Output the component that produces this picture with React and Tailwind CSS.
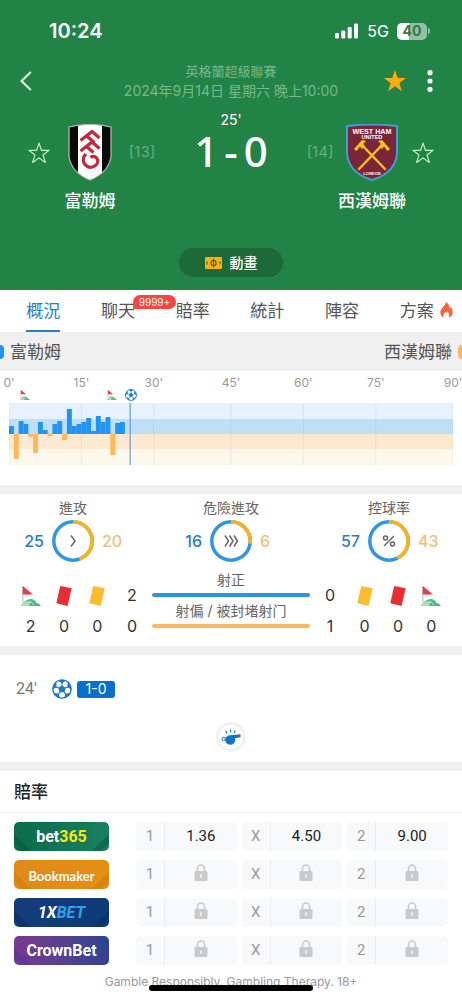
import React from "react";

const tabs = [
  { label: "概況", active: true },
  { label: "聊天", badge: "9999+" },
  { label: "賠率" },
  { label: "統計" },
  { label: "陣容" },
  { label: "方案", hot: true },
];

// Momentum per minute: positive is home pressure, negative is away pressure.
const momentum = [
  8, -25, 13, 10, -3, -19, 12, 4, -2, 10, 13, -6, 25, 8, 10, 12, 16, 3, 18, 12,
  17, -21, 11, 12,
];

// Each half takes one extra slot for stoppage time.
const SLOTS = 92;
const gridSlots = [0, 15, 30, 46, 61, 76, 92];
const minuteLabels = ["0'", "15'", "30'", "45'", "60'", "75'", "90'"];

const bookmakers = [
  {
    id: "bet365",
    bg: "bg-linear-to-r from-[#0b6b4b] to-[#1a8060]",
    stripe: "#05573b",
    logo: (
      <span className="font-['Roboto',sans-serif] text-[16px] font-bold">
        bet<span className="text-[#f5e81e]">365</span>
      </span>
    ),
    odds: ["1.36", "4.50", "9.00"],
  },
  {
    id: "Bookmaker",
    bg: "bg-linear-to-r from-[#e08a1a] to-[#e48e14]",
    stripe: "#cf7a0c",
    logo: (
      <span className="font-['Lato',sans-serif] text-[13px] font-bold">Bookmaker</span>
    ),
    odds: [null, null, null],
  },
  {
    id: "1XBET",
    bg: "bg-linear-to-r from-[#143c7a] to-[#0d3a78]",
    stripe: "#0a2c60",
    logo: (
      <span className="font-['Roboto',sans-serif] text-[16px] font-bold italic">
        1X<span className="text-[#2aa5e8]">BET</span>
      </span>
    ),
    odds: [null, null, null],
  },
  {
    id: "CrownBet",
    bg: "bg-linear-to-r from-[#78398f] to-[#2b4390]",
    stripe: "#4b3a92",
    logo: (
      <span className="font-['Roboto',sans-serif] text-[16px] font-bold">CrownBet</span>
    ),
    odds: [null, null, null],
  },
];

function Star({ filled, className }) {
  return (
    <svg viewBox="0 0 24 24" className={className} aria-hidden="true">
      <path
        d="M12 1.200l2.700 7.900h8.300l-6.600 5 2.500 8.200L12 17.300l-6.900 5 2.500-8.200-6.600-5h8.300z"
        fill={filled ? "#fbac13" : "none"}
        stroke={filled ? "none" : "#c8f0c8"}
        strokeWidth="1.3"
        strokeLinejoin="round"
      />
    </svg>
  );
}

function FulhamCrest() {
  return (
    <svg viewBox="0 0 44 57" className="h-[57px] w-11" role="img" aria-label="富勒姆">
      <defs>
        <clipPath id="fulham-shield">
          <path d="M1 3Q22-2 43 3V33Q40 49 22 56Q4 49 1 33Z" />
        </clipPath>
      </defs>
      <g clipPath="url(#fulham-shield)">
        <rect width="44" height="57" fill="#0a0a0a" />
        <rect x="10" width="24" height="57" fill="#fff" />
      </g>
      <path d="M1 3Q22-2 43 3V33Q40 49 22 56Q4 49 1 33Z" fill="none" stroke="#b9bdb9" strokeWidth="1.2" />
      <g fill="none" stroke="#c4283c" strokeWidth="3.200" strokeLinejoin="round">
        <path d="M12.500 16.500L24 7.500L31.500 14M18.500 12L26.500 18.500" />
        <path d="M12.500 27L24 18L31.500 24.500M18.500 22.500L25.500 28.500" />
        <path d="M18 30C14 33.500 14.500 40 19.500 42.500C25 45 31 40.500 29.500 35.500C28.500 32.500 25 31.500 22.500 33.500" />
      </g>
    </svg>
  );
}

function WestHamCrest() {
  return (
    <svg viewBox="0 0 54 57" className="h-[57px] w-[54px]" role="img" aria-label="西漢姆聯">
      <path d="M2 2Q27-1 52 2V30Q50 49 27 56Q4 49 2 30Z" fill="#7b2638" stroke="#3fa0d8" strokeWidth="2" />
      <g fill="#fff" fontFamily="Liberation Sans, sans-serif" fontWeight="bold" textAnchor="middle">
        <text x="27" y="9.500" fontSize="7.200">WEST HAM</text>
        <text x="27" y="14.800" fontSize="5.600">UNITED</text>
        <text x="27" y="51" fontSize="4">LONDON</text>
      </g>
      <g stroke="#f6c21c" strokeLinecap="round">
        <path d="M15.500 19.500L40 45M38.500 19.500L14 45" strokeWidth="2.400" />
      </g>
      <path d="M9 25L17 16L21 17L18 20L20 22L17 25L15 22.500L11.500 27Z" fill="#f6c21c" />
      <path d="M45 25L37 16L33 17L36 20L34 22L37 25L39 22.500L42.500 27Z" fill="#f6c21c" />
    </svg>
  );
}

function Ball({ className }) {
  return (
    <svg viewBox="0 0 24 24" className={className} aria-hidden="true">
      <circle cx="12" cy="12" r="11" fill="#fff" stroke="#1b75c9" strokeWidth="1.600" />
      <g fill="#1b75c9" stroke="#1b75c9" strokeWidth="1.300" strokeLinejoin="round">
        <path d="M12 8.200l3.700 2.700-1.400 4.300H9.700L8.300 10.900z" />
        <path d="M12 8.200V4.500M15.700 10.900l3.500-1.200M14.300 15.200l2.300 3.200M9.700 15.200l-2.300 3.200M8.300 10.900L4.800 9.700" fill="none" />
        <path d="M8.500 1.800L12 4.500l3.500-2.700zM19.200 9.700l.1-4.500 3.500 6.300zM16.600 18.400l4.400-.9-5.500 4.600zM7.400 18.400l-4.400-.9 5.500 4.600zM4.800 9.700L4.700 5.200 1.200 11.500z" />
      </g>
    </svg>
  );
}

function Corner({ className }) {
  return (
    <svg viewBox="0 0 20 20" className={className} aria-hidden="true">
      <path d="M0 20Q2 15.500 7 13.500Q13 11.500 15.500 17Q18 17 20 20Z" fill="#55b487" />
      <path d="M0 20Q2 16 6 15L10 16L8 20Z" fill="#a9dcc2" />
      <path d="M8 15.500l3 1 1.500 2.500" fill="none" stroke="#d7f0e3" strokeWidth=".8" />
      <path d="M1.800 0V16" stroke="#b4b4b4" strokeWidth="1" />
      <path d="M1.800 0L12 8.500H1.800Z" fill="#ea3b46" />
    </svg>
  );
}

function Card({ color }) {
  return (
    <svg viewBox="0 0 16 20" className="h-5 w-4" aria-hidden="true">
      <path d="M4.200 0L15.700 2.200L11.500 20L.300 17.300Z" fill={color} />
    </svg>
  );
}

function Lock() {
  return (
    <svg viewBox="0 0 14 17" className="mb-1 h-[17px] w-3.5" aria-label="已鎖定" role="img">
      <path d="M3.500 8V4.500a3.500 3.500 0 017 0v3.500" fill="none" stroke="#cacaca" strokeWidth="1.600" />
      <rect x=".5" y="7" width="13" height="10" rx="1.200" fill="#cacaca" />
      <path d="M7 10.200v3.600" stroke="#f5f5f5" strokeWidth="1.600" />
    </svg>
  );
}

function Flame() {
  return (
    <svg viewBox="0 0 13 16" className="h-4 w-[13px]" aria-hidden="true">
      <path
        d="M5.800 0C6 3.500 1 5.500.400 9.800C0 12.500 1.500 15 3.800 15.800C2.600 13.500 3.800 11.300 5.500 9.700C6 11 7 11 7.500 9.500C9.600 11.500 9.800 13.800 8.800 15.800C11.800 14.800 13 12.200 12.600 9.200C12.300 7 11.300 5.500 10.800 4.500C10.600 5.700 10.200 6.200 9.500 6.600C9.700 3.800 8.300 1.200 5.800 0Z"
        fill="#f2643d"
      />
    </svg>
  );
}

function Whistle() {
  return (
    <svg viewBox="0 0 20 16" className="h-4 w-5" aria-hidden="true">
      <path d="M7 6.500L19.500 5.300V8.300L14 9.300A5 5 0 114.800 8.500Z" fill="#1673cc" />
      <circle cx="2.700" cy="10" r="1.700" fill="none" stroke="#1673cc" strokeWidth="1" />
      <path d="M6 4.500L4.900 2M9.500 3.500V.500M13 4L14.200 1.500" stroke="#1673cc" strokeWidth="1.200" />
    </svg>
  );
}

function Dial({ title, home, away, children }) {
  const awayShare = (away / (home + away)) * 100;
  return (
    <div className="flex flex-col items-center">
      <h3 className="text-sm leading-5 text-[#666]">{title}</h3>
      <div className="mt-0.5 flex items-center gap-2 text-base font-medium">
        <span className="w-7 text-right text-[#3079c6]">{home}</span>
        <svg viewBox="0 0 42 42" className="size-[42px]" aria-hidden="true">
          <circle cx="21" cy="21" r="19.200" fill="none" stroke="#2f96e6" strokeWidth="3.500" />
          <circle
            cx="21"
            cy="21"
            r="19.200"
            fill="none"
            stroke="#fbb31c"
            strokeWidth="3.500"
            pathLength="100"
            strokeDasharray={`${awayShare} 100`}
            transform="rotate(-90 21 21)"
          />
          <g fill="none" stroke="#666" strokeWidth="1.500">{children}</g>
        </svg>
        <span className="w-7 text-[#f2bf7d]">{away}</span>
      </div>
    </div>
  );
}

function Counts({ items }) {
  return (
    <div className="mt-3.5 grid w-[100px] shrink-0 grid-cols-3">
      {items.map(([icon, n], i) => (
        <div key={i} className="flex flex-col items-center">
          <span className="flex h-[31px] items-center">{icon}</span>
          <span className="h-[31px] leading-[31px]">{n}</span>
        </div>
      ))}
    </div>
  );
}

function Pair({ values }) {
  return (
    <div className="mt-3.5 w-9 shrink-0 text-center">
      {values.map((v, i) => (
        <div key={i} className="h-[31px] leading-[31px]">{v}</div>
      ))}
    </div>
  );
}

function Header() {
  return (
    <header className="bg-[#228346] pb-[13px] text-white">
      <div className="flex h-[62px] items-center justify-between pr-8 pl-[49px]">
        <span className="text-[20px] font-semibold">10:24</span>
        <div className="flex items-center gap-2">
          <svg viewBox="0 0 24 16" className="h-4 w-6" fill="#fff" aria-hidden="true">
            <rect x="0" y="10" width="4" height="5.500" rx="1.200" />
            <rect x="6.300" y="7.500" width="4" height="8" rx="1.200" />
            <rect x="12.700" y="4" width="4" height="11.500" rx="1.200" />
            <rect x="19" y=".5" width="4" height="15" rx="1.200" />
          </svg>
          <span className="text-base">5G</span>
          <div className="flex items-center gap-px">
            <span className="flex h-[17px] w-[30px] items-center justify-center rounded-[5px] bg-linear-to-r from-white from-40% to-[#91c1a2] to-40% text-sm font-bold text-[#3c7350]">
              40
            </span>
            <span className="h-1.5 w-0.5 rounded-r bg-[#91c1a2]" />
          </div>
        </div>
      </div>

      <div className="flex h-[38px] items-center justify-between pr-[29px] pl-5">
        <button aria-label="返回" className="w-[59px]">
          <svg viewBox="0 0 12 20" className="h-5 w-3" aria-hidden="true">
            <path d="M10.800 1L1.500 10l9.300 9" fill="none" stroke="#e8fbe8" strokeWidth="2" />
          </svg>
        </button>
        <div className="text-center text-[13px] leading-[19px] text-[#78b98a]">
          <p>英格蘭超級聯賽</p>
          <p className="text-sm leading-[19px]">2024年9月14日 星期六 晚上10:00</p>
        </div>
        <div className="flex items-center gap-5">
          <button aria-label="收藏比賽">
            <Star filled className="size-6" />
          </button>
          <button aria-label="更多">
            <svg viewBox="0 0 6 22" className="h-[22px] w-1.5" fill="#fff" aria-hidden="true">
              <circle cx="3" cy="2.700" r="2.600" />
              <circle cx="3" cy="11" r="2.600" />
              <circle cx="3" cy="19.300" r="2.600" />
            </svg>
          </button>
        </div>
      </div>

      <div className="mt-[11px] flex items-start px-7">
        <button aria-label="收藏富勒姆" className="mt-[13px] flex h-[57px] items-center">
          <Star className="size-[22px]" />
        </button>
        <div className="mt-[13px] flex w-20 flex-col items-center">
          <FulhamCrest />
          <h2 className="mt-2 text-[17px] leading-6 font-medium">富勒姆</h2>
        </div>
        <span className="mt-[13px] flex h-[57px] w-6 items-center justify-center text-[15px] text-[#67ae7b]">[13]</span>
        <div className="flex flex-1 flex-col items-center">
          <span className="text-sm leading-[18px]">25'</span>
          <div className="mt-0.5 flex items-start gap-1.5 font-['Noto_Sans',sans-serif] text-[42px] leading-10 font-medium">
            <span>1</span>
            <span>-</span>
            <span>0</span>
          </div>
        </div>
        <span className="mt-[13px] flex h-[57px] w-6 items-center justify-center text-[15px] text-[#67ae7b]">[14]</span>
        <div className="mt-[13px] flex w-20 flex-col items-center">
          <WestHamCrest />
          <h2 className="mt-2 text-[17px] leading-6 font-medium">西漢姆聯</h2>
        </div>
        <button aria-label="收藏西漢姆聯" className="mt-[13px] flex h-[57px] items-center">
          <Star className="size-[22px]" />
        </button>
      </div>

      <button className="mx-auto mt-[35px] flex h-[29px] w-[104px] items-center justify-center gap-2 rounded-full bg-[#1b6a38] text-sm font-medium">
        <svg viewBox="0 0 17 12" className="h-3 w-[17px]" aria-hidden="true">
          <rect width="17" height="12" rx="1" fill="#fbb116" />
          <g fill="none" stroke="#4b6a24" strokeWidth="1.200">
            <circle cx="8.500" cy="6" r="2.600" />
            <path d="M8.500 1.500v9M2 4.500v3M15 4.500v3" />
          </g>
        </svg>
        動畫
      </button>
    </header>
  );
}

function Tabs() {
  return (
    <nav className="grid h-[42px] grid-cols-6 pr-2 pl-1.5">
      {tabs.map((t) => (
        <a
          key={t.label}
          href="#"
          aria-current={t.active ? "page" : undefined}
          className={
            "relative mx-auto flex items-center border-b-2 pt-1 text-[17px] " +
            (t.active ? "border-[#2b7fc6] text-[#2b7fc6]" : "border-transparent text-[#555]")
          }
        >
          {t.label}
          {t.badge && (
            <span className="absolute top-[5px] left-8 flex h-3.5 w-[43px] items-center justify-center rounded-full rounded-bl-none bg-[#fb4444] text-[10px] text-white">
              {t.badge}
            </span>
          )}
          {t.hot && (
            <span className="absolute top-3 left-10">
              <Flame />
            </span>
          )}
        </a>
      ))}
    </nav>
  );
}

function Momentum() {
  const at = (minute) => ({ left: `${(minute / SLOTS) * 100}%` });
  return (
    <section className="pr-[9px] pl-[9px]">
      <div className="grid grid-cols-[15fr_15fr_16fr_15fr_15fr_16fr_0px] pt-1 text-xs leading-4 text-[#999]">
        {minuteLabels.map((m) => (
          <span key={m} className="flex w-0 justify-center whitespace-nowrap">{m}</span>
        ))}
      </div>
      <div className="relative mt-3 pb-5">
        <svg viewBox="0 0 92 62" preserveAspectRatio="none" className="h-[62px] w-full" role="img" aria-label="進攻走勢">
          <rect width="92" height="16" fill="#e6f2fd" />
          <rect y="16" width="92" height="15" fill="#bfdff8" />
          <rect y="31" width="92" height="15" fill="#fce9d0" />
          <rect y="46" width="92" height="16" fill="#fef7ec" />
          {gridSlots.map((g) => (
            <path key={g} d={`M${g} 0V62`} stroke="#8a9bb0" strokeOpacity=".15" vectorEffect="non-scaling-stroke" />
          ))}
          {momentum.map((v, i) => (
            <rect
              key={i}
              x={i}
              y={v > 0 ? 31 - v : 31}
              width="1.02"
              height={Math.abs(v)}
              fill={v > 0 ? "#2195ef" : "#fbb95c"}
            />
          ))}
          <path d="M25.100 0V62" stroke="#4b8fcb" vectorEffect="non-scaling-stroke" />
        </svg>
        <span className="absolute -top-[13px] -translate-x-1/2" style={at(3.3)}>
          <Corner className="size-2.5" />
        </span>
        <span className="absolute -top-[13px] -translate-x-1/2" style={at(21.3)}>
          <Corner className="size-2.5" />
        </span>
        <span className="absolute -top-3.5 -translate-x-1/2" style={at(25.2)}>
          <Ball className="size-3" />
        </span>
      </div>
    </section>
  );
}

function Stats() {
  const corner = <Corner className="size-5" />;
  const red = <Card color="#e62f33" />;
  const yellow = <Card color="#fdbb30" />;
  return (
    <section className="pt-1 pb-1">
      <div className="flex justify-between px-4">
        <Dial title="進攻" home={25} away={20}>
          <path d="M19 15.500l4 5.500-4 5.500" />
        </Dial>
        <Dial title="危險進攻" home={16} away={6}>
          <path d="M15 15.500l3.500 5.500-3.500 5.500M19.500 15.500L23 21l-3.500 5.500M24 15.500l3.500 5.500-3.500 5.500" />
        </Dial>
        <Dial title="控球率" home={57} away={43}>
          <circle cx="17.500" cy="18" r="2" />
          <circle cx="24.500" cy="24" r="2" />
          <path d="M26 16L16 26" />
        </Dial>
      </div>
      <div className="mt-1 flex items-start px-3.5 text-base text-[#333]">
        <Counts items={[[corner, 2], [red, 0], [yellow, 0]]} />
        <Pair values={[2, 0]} />
        <div className="mx-0.5 flex-1 text-center text-sm text-[#666]">
          <div className="h-[31px] pt-1">
            <p className="leading-5">射正</p>
            <div className="mt-[3px] h-1 rounded-full bg-[#2f93e0]" />
          </div>
          <div className="h-[31px] pt-1">
            <p className="leading-5">射偏 / 被封堵射门</p>
            <div className="mt-[3px] h-1 rounded-full bg-[#f9b964]" />
          </div>
        </div>
        <Pair values={[0, 1]} />
        <Counts items={[[yellow, 0], [red, 0], [corner, 0]]} />
      </div>
    </section>
  );
}

function Odds() {
  return (
    <section>
      <h2 className="h-[42px] border-b border-[#f0f0f0] px-3.5 pt-px text-[17px] leading-[41px] font-medium text-[#222]">賠率</h2>
      <div className="flex flex-col gap-[9px] px-3.5 pt-[9px]">
        {bookmakers.map((b) => (
          <div key={b.id} className="flex h-[29px] gap-[27px]">
            <a
              href="#"
              className={"relative flex w-[95px] items-center justify-center overflow-hidden rounded-[5px] text-white " + b.bg}
            >
              <svg viewBox="0 0 95 29" className="absolute inset-0 size-full" aria-hidden="true">
                <path d="M0 12L17 29H8L0 21ZM95 12L78 29H87L95 21Z" fill={b.stripe} fillOpacity=".5" />
              </svg>
              <span className="relative">{b.logo}</span>
            </a>
            <div className="grid flex-1 grid-cols-3 gap-[5px] font-['Roboto',sans-serif]">
              {["1", "X", "2"].map((k, i) => (
                <button key={k} className="flex items-stretch rounded-[5px] bg-[#f8f9fb]">
                  <span className="flex w-[29px] items-center justify-center border-r border-[#ececef] text-[15px] text-[#999]">
                    {k}
                  </span>
                  <span className="flex flex-1 items-center justify-center text-[15px] text-[#222]">
                    {b.odds[i] ?? <Lock />}
                  </span>
                </button>
              ))}
            </div>
          </div>
        ))}
      </div>
      <p className="mt-2 pb-[9px] text-center text-xs leading-[18px] text-[#999]">
        Gamble Responsibly. Gambling Therapy. 18+
      </p>
    </section>
  );
}

export default function App() {
  return (
    <div className="relative bg-white font-['Inter','Noto_Sans_CJK_TC',sans-serif]">
      <Header />
      <Tabs />
      <div className="flex h-[39px] items-center justify-between bg-[#f0f0f0] text-[17px] text-[#555]">
        <div className="flex items-center gap-1.5">
          <span className="h-3.5 w-1 rounded-r bg-[#2195ef]" />
          <span className="pt-0.5">富勒姆</span>
        </div>
        <div className="flex items-center gap-1.5">
          <span className="pt-0.5">西漢姆聯</span>
          <span className="h-3.5 w-1 rounded-l bg-[#fbb95c]" />
        </div>
      </div>
      <Momentum />
      <div className="h-[9px] bg-[#f0f0f0]" />
      <Stats />
      <div className="h-[9px] bg-[#f0f0f0]" />
      <section className="px-4 pt-[22px] pb-2.5">
        <div className="flex h-6 items-center">
          <span className="w-9 font-['Roboto',sans-serif] text-base text-[#777]">24'</span>
          <Ball className="size-5" />
          <span className="ml-[5px] flex h-[17px] w-[38px] items-center justify-center rounded-[3px] bg-[#0a6fcb] text-sm text-white">
            1-0
          </span>
        </div>
        <div className="mx-auto mt-[21px] flex size-[30px] items-center justify-center rounded-full border-3 border-[#f2f2f2]">
          <Whistle />
        </div>
      </section>
      <div className="h-[9px] bg-[#f0f0f0]" />
      <Odds />
      <div className="fixed bottom-[9px] left-1/2 h-1.5 w-[164px] -translate-x-1/2 rounded-full bg-black" />
    </div>
  );
}
